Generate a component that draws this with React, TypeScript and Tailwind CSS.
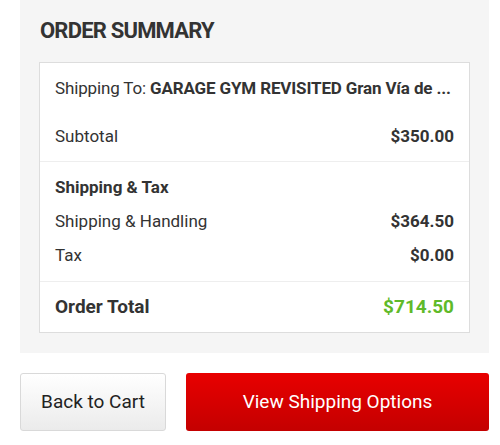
import React from "react";

function Row({ label, value, bold, className = "" }: { label: React.ReactNode; value?: React.ReactNode; bold?: boolean; className?: string }) {
  return (
    <div className={`flex h-6 items-center justify-between ${className}`}>
      <span className={bold ? "font-bold" : ""}>{label}</span>
      {value !== undefined && <span className="font-bold">{value}</span>}
    </div>
  );
}

export default function App() {
  return (
    <div className="w-[500px] h-[445px] bg-white text-[#333]" style={{ fontFamily: "Roboto, 'Noto Sans', sans-serif" }}>
      <div className="ml-[20px] w-[469px] bg-[#f5f5f5] px-[19px] pt-[18px] pb-[20px]">
        <h2 className="h-[26px] pl-px text-[22px] leading-[26px] font-bold uppercase tracking-[-0.8px] text-[#333]">Order Summary</h2>
        <div className="mt-[18px] border border-[#dddddd] bg-white text-[17px] leading-6">
          <div className="flex flex-col gap-[24px] px-[15px] py-[13px]">
            <div className="h-6 whitespace-nowrap tracking-[-0.15px]">
              Shipping To: <span className="font-bold">GARAGE GYM REVISITED Gran Vía de ...</span>
            </div>
            <Row label="Subtotal" value="$350.00" />
          </div>
          <div className="flex flex-col gap-[10px] border-t border-[#eeeeee] px-[15px] pt-[13px] pb-[14px]">
            <Row label="Shipping & Tax" bold />
            <Row label="Shipping & Handling" value="$364.50" />
            <Row label="Tax" value="$0.00" />
          </div>
          <div className="border-t border-[#eeeeee] px-[15px] py-[13px]">
            <div className="flex h-6 items-center justify-between text-[19px] font-bold">
              <span>Order Total</span>
              <span className="text-[#5fba29]">$714.50</span>
            </div>
          </div>
        </div>
      </div>
      <div className="mt-[20px] flex gap-[20px] pl-[20px]">
        <button className="h-[58px] w-[146px] rounded-[3px] border border-[#d9d9d9] bg-gradient-to-b from-white to-[#ebebeb] text-[19px] text-[#222]">
          Back to Cart
        </button>
        <button className="h-[58px] w-[303px] rounded-[3px] bg-gradient-to-b from-[#e80000] to-[#c40000] text-[19px] text-white">
          View Shipping Options
        </button>
      </div>
    </div>
  );
}
